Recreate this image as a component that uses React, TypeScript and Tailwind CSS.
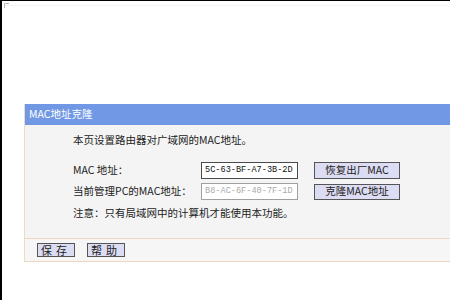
export default function App() {
  const cjk = { fontFamily: '"Noto Sans CJK SC", "Liberation Sans", sans-serif' };
  const mono = { fontFamily: '"Liberation Mono", monospace' };

  return (
    <div
      className="relative h-[300px] w-[450px] overflow-hidden border-l-2 border-t border-black bg-white text-[10.5px] text-[#222]"
      style={cjk}
    >
      <div className="absolute left-[2px] top-[2px] h-[5px] w-[5px] border-l border-t border-[#bbb]" />
      <div className="mx-[2px] mt-[4px] h-px bg-[#f2f2f2]" />

      <div className="ml-[22px] mt-[98px] border-l border-[#ecdcc4]">
        <div className="flex h-[21px] items-center bg-[#7098e4] pl-[4px] text-[10.5px] leading-none text-white">
          MAC地址克隆
        </div>

        <div className="h-[113px] bg-[#f4f4f4] pl-[48px] pt-[9px]">
          <div className="h-[12px] leading-[12px]">本页设置路由器对广域网的MAC地址。</div>

          <div className="mt-[16px] flex h-[17px] items-center">
            <div className="w-[128px] leading-none">MAC 地址：</div>
            <div
              className="flex h-[17px] w-[97px] items-center border border-[#4a4a4a] bg-white pl-[3px] text-[8.6px] text-[#111]"
              style={mono}
            >
              5C-63-BF-A7-3B-2D
            </div>
            <div className="ml-[16px] flex h-[17px] w-[86px] items-center justify-center border border-[#555] bg-[#dcdcf2] text-[10.5px] leading-none text-[#222]">
              恢复出厂MAC
            </div>
          </div>

          <div className="mt-[4px] flex h-[17px] items-center">
            <div className="w-[128px] leading-none">当前管理PC的MAC地址：</div>
            <div
              className="flex h-[17px] w-[97px] items-center border border-[#a0a0a0] bg-white pl-[3px] text-[8.6px] text-[#aaa]"
              style={mono}
            >
              B8-AC-6F-40-7F-1D
            </div>
            <div className="ml-[16px] flex h-[16px] w-[86px] items-center justify-center border border-[#555] bg-[#dcdcf2] text-[10.5px] leading-none text-[#222]">
              克隆MAC地址
            </div>
          </div>

          <div className="mt-[7px] h-[12px] leading-[12px]">注意：只有局域网中的计算机才能使用本功能。</div>
        </div>

        <div className="flex h-[24px] items-center gap-[12px] border-y border-[#ecd8bc] bg-[#f6f6f6] pl-[12px]">
          <div className="flex h-[14px] w-[38px] items-center justify-center border border-[#555] bg-[#dcdcf2] text-[11px] leading-none tracking-[4px] text-[#222]">
            保存
          </div>
          <div className="flex h-[14px] w-[38px] items-center justify-center border border-[#555] bg-[#dcdcf2] text-[11px] leading-none tracking-[4px] text-[#222]">
            帮助
          </div>
        </div>
      </div>
    </div>
  );
}
